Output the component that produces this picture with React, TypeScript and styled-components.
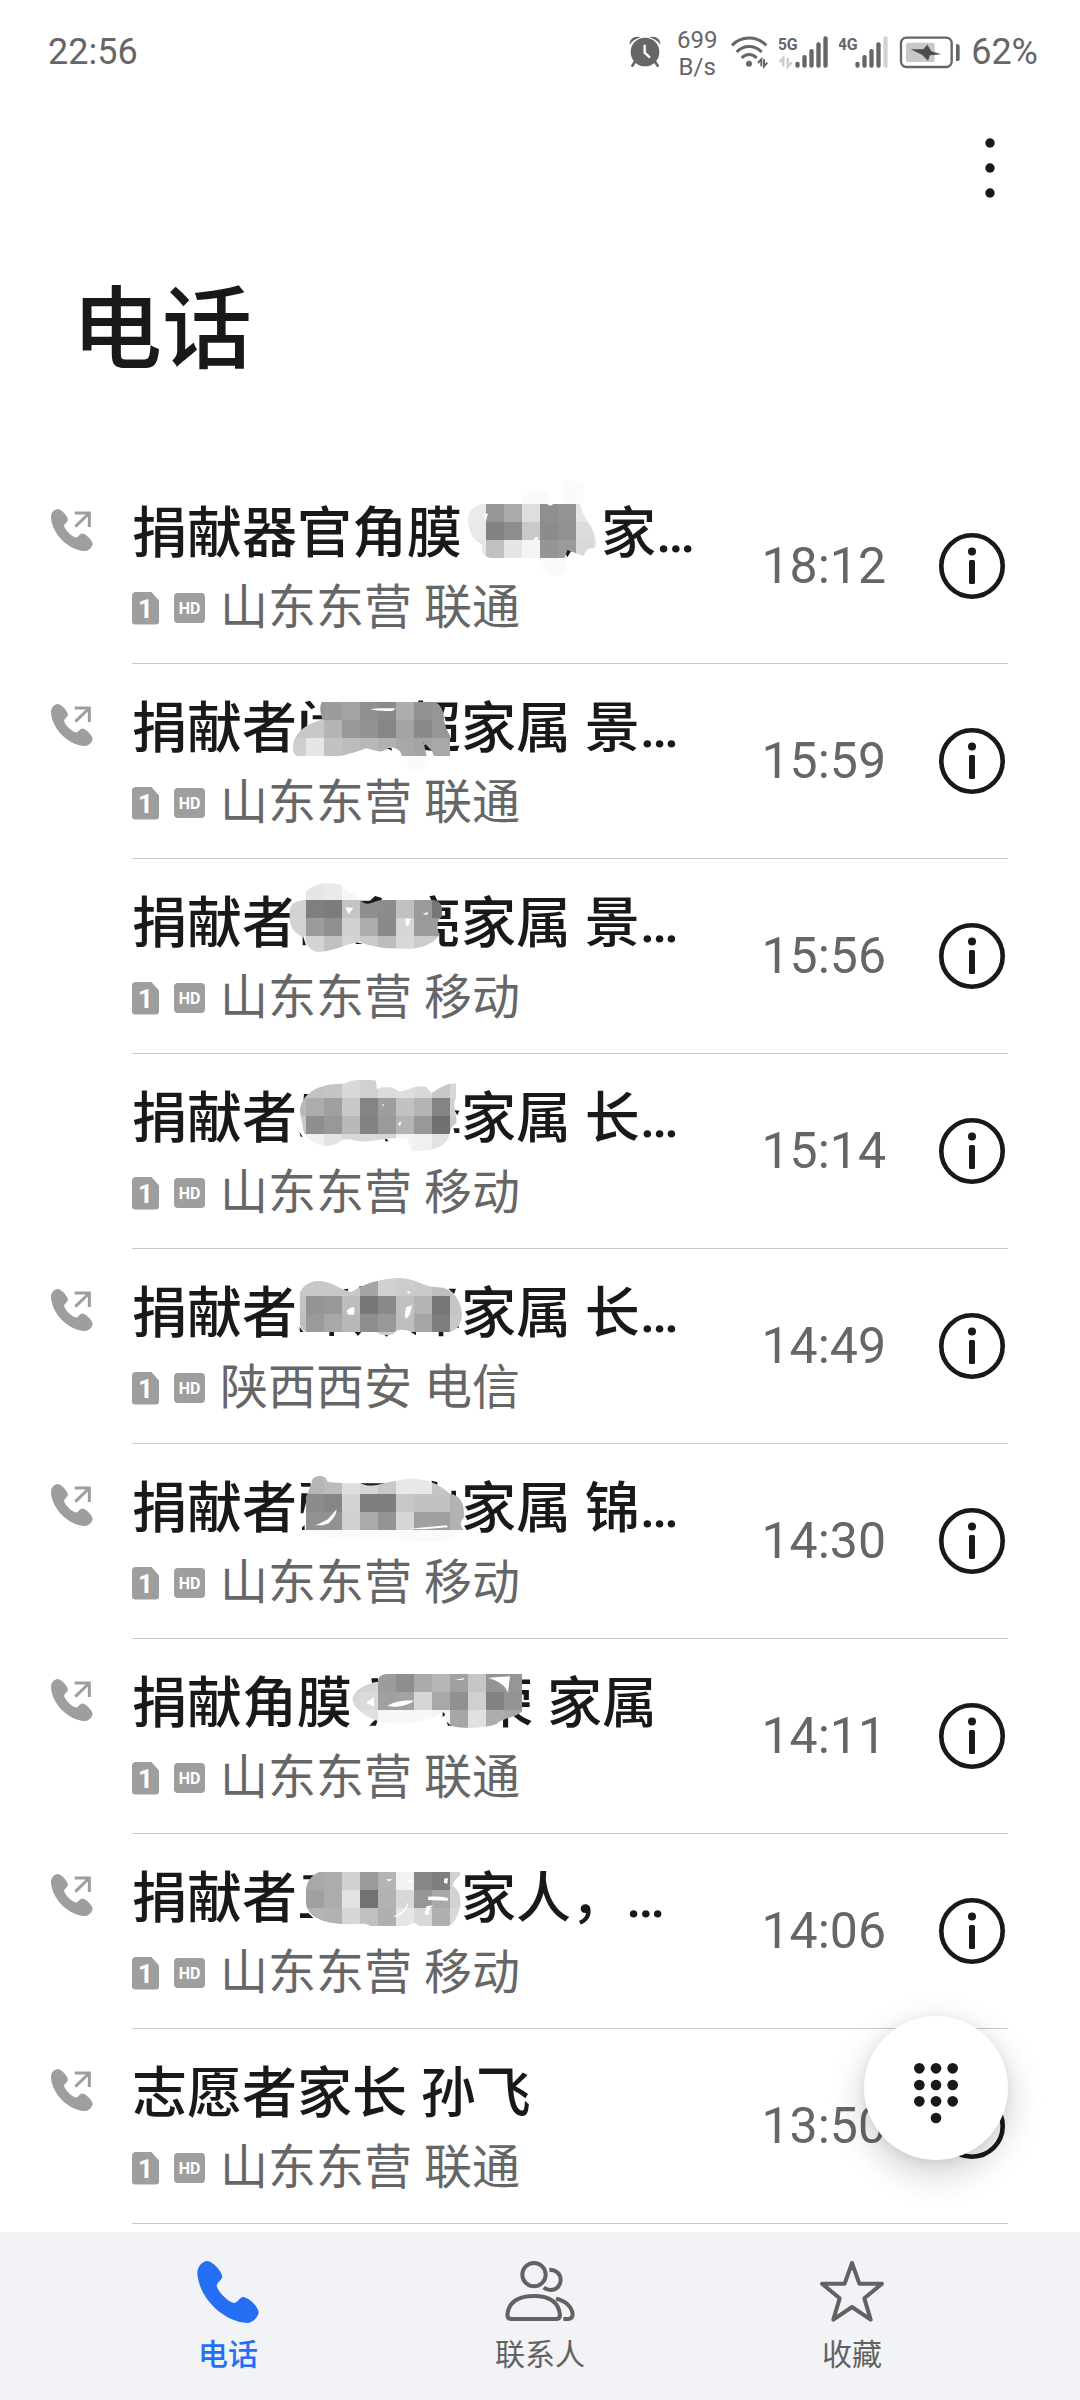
import React from "react";
import styled, { createGlobalStyle } from "styled-components";

const ink = "#191919";
const muted = "#666666";
const faint = "#9e9e9e";
const accent = "#256ff5";

const GlobalStyle = createGlobalStyle`
  *, *::before, *::after { box-sizing: border-box; }
  body {
    margin: 0;
    background: #fff;
    color: ${ink};
    font-family: Roboto, "Noto Sans CJK SC", sans-serif;
  }
  button { font: inherit; color: inherit; background: none; border: 0; padding: 0; cursor: pointer; }
  svg { display: block; flex: none; }
`;

const Page = styled.div`
  min-height: 100vh;
  display: flex;
  flex-direction: column;
`;

const StatusBar = styled.div`
  height: 104px;
  padding: 0 42px 0 48px;
  display: flex;
  align-items: center;
  justify-content: space-between;
  color: ${muted};
  font-size: 36px;
  line-height: 48px;
`;

const StatusIcons = styled.div`
  display: flex;
  align-items: center;
  gap: 10px;
`;

const Speed = styled.div`
  width: 40px;
  padding-top: 3px;
  display: flex;
  flex-direction: column;
  align-items: center;
  font-size: 24px;
  line-height: 27px;
`;

const AppBar = styled.div`
  height: 128px;
  padding: 0 54px;
  display: flex;
  align-items: center;
  justify-content: flex-end;
`;

const MoreButton = styled.button`
  width: 72px;
  height: 96px;
  display: flex;
  align-items: center;
  justify-content: center;
`;

const Heading = styled.h1`
  margin: 0;
  padding: 39px 72px 78px;
  font-size: 90px;
  line-height: 120px;
  font-weight: 500;
`;

const CallList = styled.ul`
  flex: 1;
  margin: 0;
  padding: 0 72px 0 0;
  list-style: none;
`;

const CallRow = styled.li`
  display: flex;
  height: 195px;
`;

const Direction = styled.div`
  width: 132px;
  padding: 40px 0 0 51px;
`;

const CallBody = styled.div`
  flex: 1;
  min-width: 0;
  display: flex;
  align-items: center;
  border-bottom: 1px solid #c9c9c9;
`;

const CallText = styled.div`
  flex: 1;
  min-width: 0;
  align-self: flex-start;
  padding-top: 28px;
  display: flex;
  flex-direction: column;
  gap: 3px;
`;

const Name = styled.div`
  display: flex;
  font-size: 55px;
  line-height: 72px;
  font-weight: 500;
  white-space: pre;
`;

const Hidden = styled.span<{ $width: number }>`
  position: relative;
  width: ${(p) => p.$width}px;
  text-align: right;
`;

const MosaicSvg = styled.svg`
  position: absolute;
  inset: 0;
  overflow: visible;
`;

const Detail = styled.div`
  height: 72px;
  display: flex;
  align-items: center;
  gap: 15px;
  color: ${muted};
  font-size: 48px;
  line-height: 72px;
`;

const Badge = styled.span<{ $sim?: boolean }>`
  width: ${(p) => (p.$sim ? 27 : 31)}px;
  height: ${(p) => (p.$sim ? 33 : 30)}px;
  border-radius: 4px;
  background: ${faint};
  color: #fff;
  font-size: ${(p) => (p.$sim ? 26 : 16)}px;
  line-height: ${(p) => (p.$sim ? 35 : 31)}px;
  font-weight: 700;
  text-align: center;
  clip-path: ${(p) => (p.$sim ? "polygon(0 0, 19px 0, 27px 9px, 27px 100%, 0 100%)" : "none")};
`;

const Time = styled.time`
  color: ${muted};
  font-size: 50px;
  line-height: 60px;
  margin-right: 53px;
`;

const InfoButton = styled.button`
  width: 66px;
  height: 66px;
  margin-right: 3px;
`;

const Footer = styled.div`
  position: sticky;
  bottom: 0;
`;

const DialButton = styled.button`
  position: absolute;
  right: 72px;
  bottom: calc(100% + 72px);
  width: 144px;
  height: 144px;
  padding-top: 12px;
  border-radius: 50%;
  background: #fff;
  display: flex;
  align-items: center;
  justify-content: center;
  box-shadow: 0 12px 36px rgba(0, 0, 0, 0.2), 0 2px 12px rgba(0, 0, 0, 0.06);
`;

const Nav = styled.nav`
  height: 168px;
  padding: 28px 72px 0;
  display: grid;
  grid-template-columns: repeat(3, 1fr);
  background: #f1f3f6;
`;

const NavItem = styled.a<{ $active?: boolean }>`
  display: flex;
  flex-direction: column;
  align-items: center;
  gap: 10px;
  color: ${(p) => (p.$active ? accent : "#626262")};
  font-size: 30px;
  line-height: 42px;
  font-weight: ${(p) => (p.$active ? 500 : 400)};
  text-decoration: none;
`;

const handset =
  "M261 123C245 124 231 140 231 160C236 235 310 305 380 309C398 308 415 290 415 276C412 258 385 232 368 231C358 232 354 246 342 249C325 247 292 215 289 197C291 186 306 180 306 169C304 155 278 124 261 123Z";

const OutgoingIcon = () => (
  <svg width="42" height="42" viewBox="65 118 126 126" aria-label="去电">
    <path d={handset} fill={faint} transform="translate(-92 34.5) scale(.679)" />
    <path d="M136 130H180V172M180 130L138 171" fill="none" stroke={faint} strokeWidth="9" />
  </svg>
);

const InfoIcon = () => (
  <svg width="66" height="66" viewBox="0 0 66 66" aria-hidden="true">
    <circle cx="33" cy="33" r="30.7" fill="none" stroke={ink} strokeWidth="4.6" />
    <circle cx="33" cy="18.5" r="4" fill={ink} />
    <rect x="30" y="27" width="6" height="24" rx="1.5" fill={ink} />
  </svg>
);

type MosaicArt = {
  width: number;
  ox: number;
  oy: number;
  gx: number;
  gy: number;
  cells: string[];
  blob: string;
  ink?: string;
  holes?: string;
  halo?: string;
  text?: string;
};

// Each cell string holds one two-digit grey level per 54-unit tile, left to right.
const Mosaic = ({ id, art }: { id: string; art: MosaicArt }) => (
  <Hidden $width={art.width}>
    {art.text}
    <MosaicSvg
      width={art.width}
      height="72"
      viewBox={`${art.ox} ${art.oy} ${art.width * 3} 216`}
      aria-hidden="true"
    >
      <clipPath id={id}>
        <path d={art.blob} />
      </clipPath>
      {art.halo && <path d={art.halo} fill="#fafafa" />}
      {art.ink && <path d={art.ink} fill={ink} />}
      <g clipPath={`url(#${id})`} shapeRendering="crispEdges">
        {art.cells.map((row, y) =>
          row.split(" ").map((g, x) => (
            <rect
              key={`${x}-${y}`}
              x={art.gx + x * 54}
              y={art.gy + y * 54}
              width="54"
              height="54"
              fill={`#${g}${g}${g}`}
            />
          ))
        )}
      </g>
      {art.holes && <path d={art.holes} fill="#fff" />}
    </MosaicSvg>
  </Hidden>
);

const arts: Record<string, MosaicArt> = {
  a: {
    width: 139, ox: 96, oy: 81, gx: 114, gy: 102,
    cells: ["eb 96 aa de 8f 94 e6 e8", "e9 82 8e c9 8c 92 dc e2", "e6 c0 e6 f5 95 9b d9 e2"],
    blob: "M114 150C114 115 140 100 175 102H450C455 130 470 150 484 170C500 205 502 225 490 236C475 232 470 240 460 258L438 250L412 240L404 264H185C165 262 150 250 156 224C128 212 114 180 114 150Z",
    halo: "M276 102C270 70 310 55 350 66L356 102ZM330 262H412C412 300 400 325 370 318C345 315 330 290 330 262ZM400 102V30L460 36V102Z",
    ink: "M442 134L462 150L440 142ZM400 236L424 242L412 262Z",
    holes: "M162 134L174 130L168 152ZM312 204L324 200L322 210L314 210ZM350 102H370L362 107Z",
  },
  b: {
    width: 164, ox: 111, oy: 66, gx: 84, gy: 96, text: "超",
    cells: ["98 98 9c a4 90 8a ae 92 96", "c8 c8 b4 98 92 86 a4 8a 96", "cf e6 c2 bc b8 b0 a8 a4 a8"],
    blob: "M186 96H520C540 98 552 120 553 155C560 190 588 215 584 240C582 258 575 258 566 258H522C515 235 500 228 490 215L500 258H426C420 235 400 232 385 232C365 255 345 240 320 235C290 245 255 258 235 258H110C95 250 95 230 105 205C120 175 155 155 188 150C180 130 178 105 186 96Z",
    ink: "M124 122H142V200L124 225ZM134 97L150 92L166 112L154 118ZM158 136H190V148H158ZM486 205L502 212L504 240ZM378 233H394L396 242Z",
    holes: "M332 118C355 112 380 116 406 114L400 122C375 124 350 122 332 118Z",
    halo: "M438 258H500C500 285 485 302 465 300C448 298 438 280 438 258Z",
  },
  c: {
    width: 164, ox: 111, oy: 651, gx: 84, gy: 636, text: "亮",
    cells: ["e4 e6 ea f6 f8 f8 f8 f8 f8", "d2 7f 7c c4 8e 8c c0 9a 76", "d2 9c 90 d0 ac 8a d6 9a 9c", "dc d4 c0 d4 ca bc d8 cc ca"],
    blob: "M88 735C88 700 105 692 138 690V664C165 640 205 632 246 645C250 665 285 665 300 690C325 715 340 690 368 690H520C545 692 550 715 545 740C530 750 530 775 538 795C520 820 490 835 450 836C390 835 340 835 300 815C260 820 220 845 175 846C150 845 135 820 135 800C100 795 88 765 88 735Z",
    ink: "M300 692H330L345 678L366 684L362 698L320 708ZM128 795L138 826H128ZM286 816L310 822H288Z",
    holes: "M256 712L280 714L266 733ZM438 745L452 748L444 770L436 762ZM488 732L504 726L502 735Z",
  },
  d: {
    width: 164, ox: 111, oy: 66, gx: 84, gy: 60,
    cells: ["c4 c2 c4 d8 d0 dc de d8 c8 d8", "b8 ac a0 c8 84 9e c2 b4 84 d0", "c8 8e 98 b8 82 9a b4 98 70 c8", "ee f0 e2 d8 da d6 f4 f0 e2 e2"],
    blob: "M120 155C120 115 155 85 200 76C230 68 250 76 262 66C285 58 320 56 348 62L350 88C370 78 400 78 415 94C440 95 470 70 500 82L515 100C535 85 560 70 588 70V115C575 130 590 160 590 190C570 200 572 215 565 235C550 265 510 275 455 274C445 250 445 240 440 234C400 232 350 240 325 244C290 248 270 232 245 240C220 265 180 262 150 240C125 220 130 200 125 182Z",
    ink: "M132 102H152L130 125ZM118 215L128 230H122ZM374 230L386 244H376ZM582 150L598 152L592 166ZM580 205H598V219H584Z",
    holes: "M366 134L372 132L370 140ZM414 190L424 184L420 200Z",
  },
  e: {
    width: 164, ox: 111, oy: 651, gx: 84, gy: 654,
    cells: ["c8 c8 c8 c8 a4 d0 cc ca be c8", "c4 94 98 bc 78 8a c0 b4 76 c6", "c0 9a a8 b8 8e 98 be a6 7e c8", "c0 c0 c0 c0 c0 ca ca c0 c0 c0"],
    blob: "M119 700C125 680 150 662 175 663C215 662 240 690 275 696C310 670 370 654 420 654C470 656 490 680 530 682C575 680 605 720 606 765C605 790 590 815 565 816H455C430 808 410 805 400 822C380 830 360 825 350 816H140C125 812 119 800 119 785Z",
    ink: "M250 688L265 686L262 696ZM296 680L308 678L304 690ZM118 800L130 816H120ZM208 814H222V828H208ZM284 816H304L294 828ZM372 824H386L380 830ZM452 816H468V826ZM536 816H550V829H536ZM565 686H588L582 702ZM588 802L596 795V805Z",
    holes: "M260 752C270 742 280 738 284 745L282 764H264ZM438 742L456 736L450 762L440 776L434 768ZM440 692L452 696L446 702Z",
  },
  f: {
    width: 164, ox: 111, oy: 36, gx: 84, gy: 48,
    cells: ["c0 b6 bc de d6 c8 e8 e8 c4 c4", "c0 8c 86 d4 7e 7e c8 c2 c2 b2", "c8 92 92 d0 aa 94 d6 a0 a0 b2"],
    blob: "M155 70C152 42 200 40 203 66L250 70H300C340 88 370 65 410 62C470 48 525 60 570 102C600 105 616 130 611 175C595 190 605 200 610 210H138V110Z",
    ink: "M122 69H152V80H124ZM124 100H145L130 160H122ZM300 70H400L355 80L318 78ZM515 62L532 66V88L515 76ZM574 92H588V108H574ZM126 202L134 196V210H126Z",
    halo: "M150 210H600C590 250 520 248 440 242C360 225 210 260 150 210Z",
    holes: "M448 206L560 196L564 202L490 208ZM204 178L230 148C228 168 218 178 206 190L188 196H166L184 188Z",
  },
  g: {
    width: 195, ox: 276, oy: 621, gx: 246, gy: 642, text: "荣 ",
    cells: ["d0 d4 9c 8e aa b6 a0 c6 94 96", "d8 da a0 a2 d6 a8 90 d0 82 94", "dc e0 f6 f7 f8 f4 a6 e0 ae a8"],
    blob: "M354 660C358 645 370 642 385 642H786V755C760 775 725 775 710 792C680 804 610 808 575 798C555 785 560 765 550 755C520 780 440 798 390 788C340 790 280 750 277 718C280 690 320 670 354 665Z",
    ink: "M334 655H354V672L336 668ZM342 782L354 776L348 797H328ZM548 756L558 762L548 772ZM560 785L575 797H564Z",
    holes: "M318 728L342 712V740ZM382 738C400 725 435 720 462 722C445 735 410 745 382 738ZM584 660L615 654L608 660ZM684 655C720 648 735 652 750 648L744 698C735 675 710 660 684 655Z",
  },
  h: {
    width: 164, ox: 111, oy: 36, gx: 84, gy: 66,
    cells: ["ac a8 ac d0 9a b4 f2 86 7e d0", "b0 a0 ac e2 72 b2 d8 96 a8 d2", "b8 b4 b2 d6 c0 b0 e6 d8 b0 d8"],
    blob: "M182 66H602C600 85 580 85 578 108C600 120 605 150 600 175C590 205 580 225 565 228H480L462 218L440 228H330C320 216 280 225 245 222C190 218 138 200 138 155V118C140 90 165 66 182 66Z",
    ink: "M130 76H166L154 88H130ZM120 190H146L160 204H120Z",
    holes: "M436 90H460L452 100ZM552 86L564 84L562 102L552 98ZM504 140C530 138 555 140 564 145V152L504 150ZM494 192L500 168L520 166C505 178 508 186 506 196ZM400 200C425 188 438 175 444 156C448 175 425 198 400 202ZM378 88H400L386 94Z",
  },
};

type Call = {
  before: string;
  art?: string;
  after?: string;
  place: string;
  time: string;
  outgoing: boolean;
};

const calls: Call[] = [
  { before: "捐献器官角膜", art: "a", after: "家…", place: "山东东营 联通", time: "18:12", outgoing: true },
  { before: "捐献者", art: "b", after: "家属 景…", place: "山东东营 联通", time: "15:59", outgoing: true },
  { before: "捐献者", art: "c", after: "家属 景…", place: "山东东营 移动", time: "15:56", outgoing: false },
  { before: "捐献者", art: "d", after: "家属 长…", place: "山东东营 移动", time: "15:14", outgoing: false },
  { before: "捐献者", art: "e", after: "家属 长…", place: "陕西西安 电信", time: "14:49", outgoing: true },
  { before: "捐献者", art: "f", after: "家属 锦…", place: "山东东营 移动", time: "14:30", outgoing: true },
  { before: "捐献角膜", art: "g", after: "家属", place: "山东东营 联通", time: "14:11", outgoing: true },
  { before: "捐献者", art: "h", after: "家人，…", place: "山东东营 移动", time: "14:06", outgoing: true },
  { before: "志愿者家长 孙飞", place: "山东东营 联通", time: "13:50", outgoing: true },
];

const AlarmIcon = () => (
  <svg width="38" height="48" viewBox="87 84 114 144" aria-label="闹钟">
    <g fill={muted}>
      <circle cx="135" cy="156" r="43" />
      <path d="M89 134C88 116 104 106 122 112C108 116 97 123 89 134ZM181 134C182 116 166 106 148 112C162 116 173 123 181 134Z" />
    </g>
    <path d="M106 184L97 197M164 184L173 197" stroke={muted} strokeWidth="8" strokeLinecap="round" />
    <path d="M134 134V158L150 173" fill="none" stroke="#fff" strokeWidth="7" />
  </svg>
);

const WifiIcon = () => (
  <svg width="42" height="48" viewBox="381 84 126 144" aria-label="WLAN">
    <g fill="none" stroke={muted} strokeWidth="9">
      <path d="M396 136C424 107 470 107 499 136M410 156C432 134 463 134 485 156M425 174C438 160 457 160 470 174" />
    </g>
    <circle cx="447" cy="191" r="9" fill={muted} />
    <path d="M484 199V178L474 189M492 178V199L502 188" fill="none" stroke={muted} strokeWidth="6" />
  </svg>
);

const SignalIcon = ({ label, level, arrows }: { label: string; level: number; arrows?: boolean }) => (
  <svg width="50" height="48" viewBox="532 84 150 144" aria-label={`${label} 信号`}>
    <text x="528" y="150" fontSize="48" fontWeight="700" fill={muted}>
      {label}
    </text>
    {arrows && (
      <path d="M545 200V174L534 187M558 174V200L570 187" fill="none" stroke="#ccc" strokeWidth="7" />
    )}
    {[18, 38, 56, 76, 94].map((h, i) => (
      <rect
        key={h}
        x={581 + i * 21}
        y={203 - h}
        width="13"
        height={h}
        rx="6"
        fill={i < level ? muted : "#d2d2d2"}
      />
    ))}
  </svg>
);

const BatteryIcon = () => (
  <svg width="62" height="48" viewBox="897 84 186 144" aria-label="充电中">
    <rect x="903" y="113" width="152" height="88" rx="16" fill="none" stroke={muted} strokeWidth="7" />
    <rect x="918" y="128" width="86" height="58" rx="6" fill="#c8c8c8" />
    <path d="M1070 133H1074Q1079 133 1079 140V176Q1079 183 1074 183H1068V133Z" fill={muted} />
    <path d="M932 148L970 148L982 134L994 154L1024 163L990 166L984 182L966 164Z" fill="#4d4d4d" />
  </svg>
);

export default function App() {
  return (
    <Page>
      <GlobalStyle />
      <StatusBar>
        <span>22:56</span>
        <StatusIcons>
          <AlarmIcon />
          <Speed>
            <span>699</span>
            <span>B/s</span>
          </Speed>
          <WifiIcon />
          <SignalIcon label="5G" level={5} arrows />
          <SignalIcon label="4G" level={4} />
          <BatteryIcon />
          <span>62%</span>
        </StatusIcons>
      </StatusBar>
      <AppBar>
        <MoreButton aria-label="更多">
          <svg width="10" height="62" viewBox="0 0 10 62" fill={ink}>
            <circle cx="5" cy="6" r="4.7" />
            <circle cx="5" cy="31" r="4.7" />
            <circle cx="5" cy="56" r="4.7" />
          </svg>
        </MoreButton>
      </AppBar>
      <Heading>电话</Heading>
      <CallList>
        {calls.map((c) => (
          <CallRow key={c.time}>
            <Direction>{c.outgoing && <OutgoingIcon />}</Direction>
            <CallBody>
              <CallText>
                <Name>
                  <span>{c.before}</span>
                  {c.art && <Mosaic id={`mosaic-${c.art}`} art={arts[c.art]} />}
                  {c.after && <span>{c.after}</span>}
                </Name>
                <Detail>
                  <Badge $sim>1</Badge>
                  <Badge>HD</Badge>
                  <span>{c.place}</span>
                </Detail>
              </CallText>
              <Time>{c.time}</Time>
              <InfoButton aria-label="详情">
                <InfoIcon />
              </InfoButton>
            </CallBody>
          </CallRow>
        ))}
      </CallList>
      <Footer>
        <DialButton aria-label="拨号盘">
          <svg width="44" height="62" viewBox="0 0 132 186" fill={ink}>
            {[16, 66, 115].map((y) =>
              [16, 66, 116].map((x) => <circle key={`${x}-${y}`} cx={x} cy={y} r="16" />)
            )}
            <circle cx="66" cy="165" r="16" />
          </svg>
        </DialButton>
        <Nav>
          <NavItem href="#calls" $active>
            <svg width="64" height="64" viewBox="227 120 192 192" aria-hidden="true">
              <path d={handset} fill={accent} />
            </svg>
            电话
          </NavItem>
          <NavItem href="#contacts">
            <svg width="72" height="64" viewBox="1152 120 216 192" fill="none" stroke="#626262" strokeWidth="12" aria-hidden="true">
              <circle cx="1242" cy="164" r="35" />
              <path d="M1288 149C1308 149 1322 162 1322 180C1322 198 1308 210 1292 210C1284 210 1277 207 1271 203" />
              <path d="M1242 228C1196 228 1166 246 1162 285C1162 293 1167 297 1175 297H1308C1316 297 1320 293 1320 285C1316 246 1288 228 1242 228Z" />
              <path d="M1308 236C1338 242 1356 262 1358 283C1358 292 1353 297 1344 297H1330" />
            </svg>
            联系人
          </NavItem>
          <NavItem href="#favorites">
            <svg width="66" height="64" viewBox="597 120 198 192" fill="none" stroke="#626262" strokeWidth="12" strokeLinejoin="round" aria-hidden="true">
              <path d="M696 129L718 191H786L733 235L752 299L696 261L640 299L659 235L606 191H674Z" />
            </svg>
            收藏
          </NavItem>
        </Nav>
      </Footer>
    </Page>
  );
}
